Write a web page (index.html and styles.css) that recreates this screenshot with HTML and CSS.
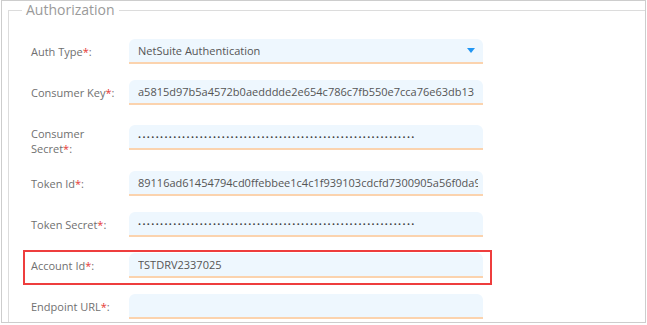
FILE: index.html
```html
<!DOCTYPE html>
<html lang="en">
<head>
    <meta charset="UTF-8">
    <meta name="viewport" content="width=device-width, initial-scale=1.0">
    <title>Authorization</title>
    <link rel="stylesheet" href="styles.css">
</head>
<body>
    <div class="frame">
        <fieldset class="auth-box">
            <legend>Authorization</legend>

            <div class="form-row">
                <label class="form-label">Auth Type<span class="req">*</span>:</label>
                <div class="field select">
                    <span>NetSuite Authentication</span>
                    <span class="caret"></span>
                </div>
            </div>

            <div class="form-row">
                <label class="form-label" for="consumerKey">Consumer Key<span class="req">*</span>:</label>
                <input class="field" id="consumerKey" type="text" value="a5815d97b5a4572b0aedddde2e654c786c7fb550e7cca76e63db13" readonly>
            </div>

            <div class="form-row tall">
                <label class="form-label" for="consumerSecret">Consumer Secret<span class="req">*</span>:</label>
                <input class="field secret" id="consumerSecret" type="password" value="111111111122222222223333333333444444444455555555556666666666123" readonly>
            </div>

            <div class="form-row">
                <label class="form-label" for="tokenId">Token Id<span class="req">*</span>:</label>
                <input class="field" id="tokenId" type="text" value="89116ad61454794cd0ffebbee1c4c1f939103cdcfd7300905a56f0da9c21" readonly>
            </div>

            <div class="form-row">
                <label class="form-label" for="tokenSecret">Token Secret<span class="req">*</span>:</label>
                <input class="field secret" id="tokenSecret" type="password" value="111111111122222222223333333333444444444455555555556666666666123" readonly>
            </div>

            <div class="form-row">
                <div class="highlight"></div>
                <label class="form-label" for="accountId">Account Id<span class="req">*</span>:</label>
                <input class="field" id="accountId" type="text" value="TSTDRV2337025" readonly>
            </div>

            <div class="form-row">
                <label class="form-label" for="endpoint">Endpoint URL<span class="req">*</span>:</label>
                <input class="field" id="endpoint" type="text" value="" readonly>
            </div>
        </fieldset>
    </div>
</body>
</html>
```

FILE: styles.css
```css
* {
    margin: 0;
    padding: 0;
    box-sizing: border-box;
    font-family: 'Open Sans', 'Noto Sans', sans-serif;
}

body {
    background-color: #fff;
}

.frame {
    width: 645px;
    height: 323px;
    margin-left: 1px;
    padding: 0 6px;
    border: 1px solid #cdcdcd;
    overflow: hidden;
}

.auth-box {
    width: 700px;
    border: 1px solid #dcdcdc;
    padding: 20px 0 0 22px;
}

.auth-box legend {
    margin-left: -9px;
    padding: 0 4px;
    font-size: 14px;
    line-height: 18px;
    color: #9a9a9a;
}

.form-row {
    position: relative;
    display: flex;
    align-items: flex-start;
    margin-bottom: 16px;
}

.form-label {
    width: 90px;
    margin-right: 8px;
    padding-top: 5px;
    font-size: 11px;
    line-height: 15px;
    color: #707070;
}

/* two-line label row */
.form-row.tall {
    margin-bottom: 15px;
}

.form-row.tall .field {
    margin-top: 4px;
}

.req {
    color: #e53935;
}

.field {
    display: block;
    width: 354px;
    height: 25px;
    padding: 0 5px 0 9px;
    border: none;
    border-bottom: 2px solid #fbd3ae;
    border-radius: 6px 6px 0 0;
    background-color: #eef7fe;
    font-size: 11px;
    color: #555;
    outline: none;
}

.field.secret {
    font-size: 8px;
    letter-spacing: 1.4px;
    color: #444;
}

.select {
    display: flex;
    align-items: center;
    padding-right: 8px;
}

.caret {
    margin-left: auto;
    width: 0;
    height: 0;
    border-left: 4px solid transparent;
    border-right: 4px solid transparent;
    border-top: 5px solid #2196f3;
}

.highlight {
    position: absolute;
    left: -8px;
    top: -3px;
    width: 469px;
    height: 35px;
    border: 2px solid #ee3d3d;
    pointer-events: none;
}
```
